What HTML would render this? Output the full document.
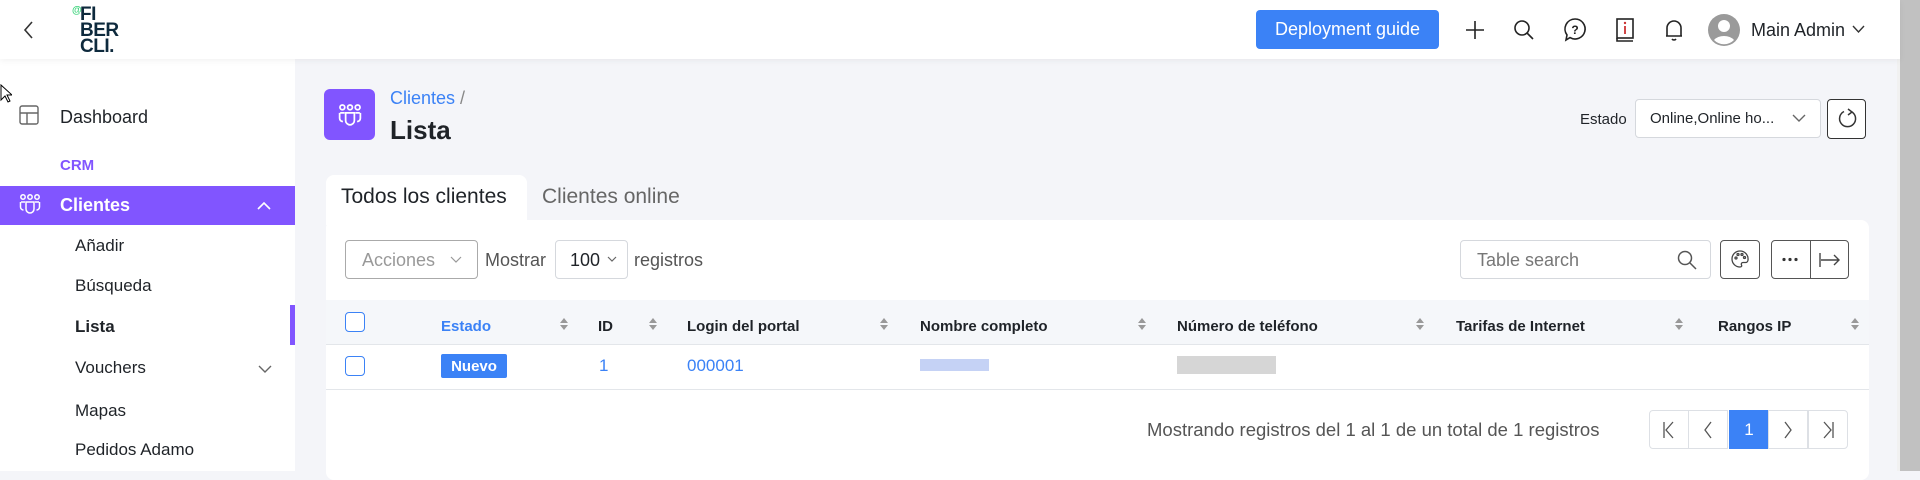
<!DOCTYPE html>
<html><head><meta charset="utf-8"><style>
*{box-sizing:border-box;margin:0;padding:0}
body{width:1920px;height:471px;overflow:hidden;background:#f4f5f9;font-family:"Liberation Sans",sans-serif;color:#1f2328;position:relative}
.a{position:absolute}
.hdr{left:0;top:0;width:1900px;height:59px;background:#fff;box-shadow:0 2px 6px rgba(0,0,0,.05);z-index:2}
.sb{left:0;top:59px;width:295px;height:412px;background:#fff}
.t{position:absolute;white-space:nowrap;line-height:1}
.sub{font-size:17px;color:#1f2328;left:75px}
.btn{position:absolute;border:1px solid #c9cdd4;border-radius:4px;background:#fff}
.th{font-size:15px;font-weight:bold;top:319px}
.sort{position:absolute;width:8px;top:318px}
.sort:before{content:"";position:absolute;left:0;top:0;border:4px solid transparent;border-bottom:5px solid #999;border-top:0}
.sort:after{content:"";position:absolute;left:0;top:7px;border:4px solid transparent;border-top:5px solid #999;border-bottom:0}
.pg{position:absolute;top:410px;height:39px;width:40px;border:1px solid #dde0e5;background:#fff;display:flex;align-items:center;justify-content:center;font-size:17px;color:#555}
</style></head><body>
<div class="a hdr">
<svg class="a" style="left:22px;top:20px" width="14" height="20" viewBox="0 0 14 20"><path d="M10 2 L3 10 L10 18" fill="none" stroke="#333" stroke-width="1.6"/></svg>
<div class="t" style="left:72px;top:6px;font-size:10px;color:#3ad37a;font-weight:bold">@</div>
<div class="t" style="left:80px;top:7px;font-size:19px;font-weight:bold;color:#0e2a3d;line-height:16px;letter-spacing:-0.5px">FI<br>BER<br>CLI.</div>
<div class="a" style="left:1256px;top:10px;width:183px;height:39px;background:#3b82f6;border-radius:4px;color:#fff;font-size:18px;display:flex;align-items:center;justify-content:center">Deployment guide</div>
<svg class="a" style="left:1464px;top:19px" width="22" height="22" viewBox="0 0 22 22"><path d="M11 2V20M2 11H20" stroke="#222" stroke-width="1.6"/></svg>
<svg class="a" style="left:1513px;top:19px" width="22" height="22" viewBox="0 0 22 22"><circle cx="9" cy="9" r="7" fill="none" stroke="#222" stroke-width="1.6"/><path d="M14 14L20 20" stroke="#222" stroke-width="1.6"/></svg>
<svg class="a" style="left:1563px;top:17px" width="24" height="26" viewBox="0 0 24 26"><path d="M12 2a10 10 0 1 1 -5 18.6 L3 23 L4 18 A10 10 0 0 1 12 2z" fill="none" stroke="#222" stroke-width="1.6"/><text x="12" y="17" font-size="12" text-anchor="middle" font-family="Liberation Sans" font-weight="bold" fill="#222">?</text></svg>
<svg class="a" style="left:1614px;top:17px" width="22" height="26" viewBox="0 0 22 26"><rect x="3" y="2" width="16" height="19" fill="none" stroke="#222" stroke-width="1.6"/><path d="M3 21v3h16" fill="none" stroke="#222" stroke-width="1.6"/><path d="M11 9v8" stroke="#c33" stroke-width="1.8"/><circle cx="11" cy="6" r="1.2" fill="#c33"/></svg>
<svg class="a" style="left:1663px;top:17px" width="22" height="26" viewBox="0 0 22 26"><path d="M4 19 V11 a7 7 0 0 1 14 0 V19 H3 H19" fill="none" stroke="#222" stroke-width="1.6"/><path d="M9 22a2.5 2.5 0 0 0 4 0" fill="none" stroke="#222" stroke-width="1.6"/></svg>
<svg class="a" style="left:1708px;top:14px" width="32" height="32" viewBox="0 0 32 32"><circle cx="16" cy="16" r="16" fill="#9a9a9a"/><circle cx="16" cy="12" r="6" fill="#fff"/><path d="M6 26a12 9 0 0 1 20 0a14 14 0 0 1 -20 0z" fill="#fff"/></svg>
<div class="t" style="left:1751px;top:21px;font-size:18px">Main Admin</div>
<svg class="a" style="left:1852px;top:25px" width="13" height="9" viewBox="0 0 13 9"><path d="M1 1L6.5 7L12 1" fill="none" stroke="#333" stroke-width="1.4"/></svg>
</div>
<div class="a" style="left:1897px;top:0;width:23px;height:471px;background:#f1f1f1"></div>
<div class="a" style="left:1900px;top:0;width:20px;height:471px;background:#c1c1c1"></div>

<div class="a sb">
<svg class="a" style="left:19px;top:46px" width="20" height="20" viewBox="0 0 20 20"><rect x="1" y="1" width="18" height="18" rx="2" fill="none" stroke="#666" stroke-width="1.4"/><path d="M1 8H19M8 8V19" stroke="#666" stroke-width="1.4"/></svg>
<div class="t" style="left:60px;top:49px;font-size:18px">Dashboard</div>
<div class="t" style="left:60px;top:99px;font-size:15px;font-weight:bold;color:#8155ff">CRM</div>
<div class="a" style="left:0;top:127px;width:295px;height:39px;background:#8155ff"></div>
<svg class="a" style="left:19px;top:134px" width="22" height="22" viewBox="0 0 22 22" fill="none" stroke="#fff" stroke-width="1.5"><circle cx="4" cy="4" r="2.2"/><circle cx="11" cy="4" r="2.2"/><circle cx="18" cy="4" r="2.2"/><path d="M2 9h4M16 9h4M1.5 9v5a3 3 0 0 0 3 3M20.5 9v5a3 3 0 0 1 -3 3M7 9h8v7a4 4 0 0 1 -8 0z"/></svg>
<div class="t" style="left:60px;top:137px;font-size:18px;font-weight:bold;color:#fff">Clientes</div>
<svg class="a" style="left:257px;top:142px" width="14" height="9" viewBox="0 0 14 9"><path d="M1 8L7 2L13 8" fill="none" stroke="#fff" stroke-width="1.6"/></svg>
<div class="t sub" style="top:178px">Añadir</div>
<div class="t sub" style="top:218px">Búsqueda</div>
<div class="t sub" style="top:259px;font-weight:bold">Lista</div>
<div class="a" style="left:290px;top:246px;width:5px;height:40px;background:#8155ff"></div>
<div class="t sub" style="top:300px">Vouchers</div>
<svg class="a" style="left:258px;top:306px" width="14" height="9" viewBox="0 0 14 9"><path d="M1 1L7 7L13 1" fill="none" stroke="#666" stroke-width="1.4"/></svg>
<div class="t sub" style="top:343px">Mapas</div>
<div class="t sub" style="top:382px">Pedidos Adamo</div>
</div>
<svg class="a" style="left:0;top:84px" width="12" height="20" viewBox="0 0 12 20"><path d="M1 1V16L5 12L8 18L10 17L7 11H12Z" fill="#fff" stroke="#000" stroke-width="1"/></svg>

<div class="a" style="left:324px;top:89px;width:51px;height:51px;background:#8155ff;border-radius:6px"></div>
<svg class="a" style="left:338px;top:103px" width="24" height="24" viewBox="0 0 22 22" fill="none" stroke="#fff" stroke-width="1.6"><circle cx="4" cy="4" r="2.2"/><circle cx="11" cy="4" r="2.2"/><circle cx="18" cy="4" r="2.2"/><path d="M2 9h4M16 9h4M1.5 9v5a3 3 0 0 0 3 3M20.5 9v5a3 3 0 0 1 -3 3M7 9h8v7a4 4 0 0 1 -8 0z"/></svg>
<div class="t" style="left:390px;top:89px;font-size:18px;color:#3b82f6">Clientes <span style="color:#888">/</span></div>
<div class="t" style="left:390px;top:117px;font-size:26px;font-weight:bold">Lista</div>
<div class="t" style="left:1580px;top:112px;font-size:15px">Estado</div>
<div class="btn" style="left:1635px;top:99px;width:186px;height:39px;border-color:#d5d8dd"></div>
<div class="t" style="left:1650px;top:111px;font-size:15px">Online,Online ho...</div>
<svg class="a" style="left:1792px;top:114px" width="14" height="9" viewBox="0 0 14 9"><path d="M1 1L7 7L13 1" fill="none" stroke="#666" stroke-width="1.4"/></svg>
<div class="btn" style="left:1827px;top:99px;width:39px;height:40px;border-color:#333"></div>
<svg class="a" style="left:1836px;top:108px" width="22" height="22" viewBox="0 0 22 22"><path d="M16 4 A8 8 0 1 1 8 3.5" fill="none" stroke="#333" stroke-width="1.5"/><path d="M12 1L16 4L12 7" fill="none" stroke="#333" stroke-width="1.5"/></svg>

<div class="a" style="left:326px;top:175px;width:201px;height:50px;background:#fff;border-radius:8px 8px 0 0"></div>
<div class="t" style="left:341px;top:186px;font-size:21px">Todos los clientes</div>
<div class="t" style="left:542px;top:186px;font-size:21px;color:#666">Clientes online</div>
<div class="a" style="left:326px;top:220px;width:1543px;height:260px;background:#fff;border-radius:8px"></div>

<div class="btn" style="left:345px;top:240px;width:133px;height:39px;border-color:#aaa"></div>
<div class="t" style="left:362px;top:251px;font-size:18px;color:#999">Acciones</div>
<svg class="a" style="left:450px;top:256px" width="12" height="8" viewBox="0 0 12 8"><path d="M1 1L6 6L11 1" fill="none" stroke="#999" stroke-width="1.2"/></svg>
<div class="t" style="left:485px;top:251px;font-size:18px;color:#555">Mostrar</div>
<div class="btn" style="left:555px;top:240px;width:73px;height:39px;border-color:#d5d8dd"></div>
<div class="t" style="left:570px;top:251px;font-size:18px">100</div>
<svg class="a" style="left:607px;top:256px" width="10" height="7" viewBox="0 0 10 7"><path d="M1 1L5 5L9 1" fill="none" stroke="#666" stroke-width="1.2"/></svg>
<div class="t" style="left:634px;top:251px;font-size:18px;color:#555">registros</div>

<div class="btn" style="left:1460px;top:240px;width:251px;height:39px;border-color:#d5d8dd"></div>
<div class="t" style="left:1477px;top:251px;font-size:18px;color:#777">Table search</div>
<svg class="a" style="left:1677px;top:250px" width="20" height="20" viewBox="0 0 20 20"><circle cx="8" cy="8" r="6.5" fill="none" stroke="#555" stroke-width="1.5"/><path d="M13 13L19 19" stroke="#555" stroke-width="1.5"/></svg>
<div class="btn" style="left:1720px;top:240px;width:40px;height:39px;border-color:#555"></div>
<svg class="a" style="left:1730px;top:249px" width="20" height="20" viewBox="0 0 20 20" fill="none" stroke="#444" stroke-width="1.3"><path d="M10 2a8 8 0 0 0 0 16c1.5 0 2-1 1.5-2s0-2.5 1.5-2.5h2.5A2.5 2.5 0 0 0 18 11 A8 8 0 0 0 10 2z"/><circle cx="6" cy="9" r="1"/><circle cx="8" cy="5.5" r="1"/><circle cx="12" cy="5.5" r="1"/><circle cx="14.5" cy="8.5" r="1"/></svg>
<div class="btn" style="left:1771px;top:240px;width:78px;height:39px;border-color:#555"></div>
<div class="a" style="left:1810px;top:240px;width:1px;height:39px;background:#555"></div>
<svg class="a" style="left:1781px;top:257px" width="18" height="5" viewBox="0 0 18 5"><circle cx="3" cy="2.5" r="1.6" fill="#333"/><circle cx="9" cy="2.5" r="1.6" fill="#333"/><circle cx="15" cy="2.5" r="1.6" fill="#333"/></svg>
<svg class="a" style="left:1818px;top:250px" width="24" height="20" viewBox="0 0 24 20"><path d="M2 3V17M3 10H21M16 5L21 10L16 15" fill="none" stroke="#444" stroke-width="1.4"/></svg>

<div class="a" style="left:326px;top:300px;width:1543px;height:45px;background:#f5f7fa;border-bottom:1px solid #e3e6ea"></div>
<div class="a" style="left:345px;top:312px;width:20px;height:20px;border:1.5px solid #3b82f6;border-radius:4px;background:#fff"></div>
<div class="t th" style="left:441px;color:#3b82f6">Estado</div><div class="sort" style="left:560px"></div>
<div class="t th" style="left:598px">ID</div><div class="sort" style="left:649px"></div>
<div class="t th" style="left:687px">Login del portal</div><div class="sort" style="left:880px"></div>
<div class="t th" style="left:920px">Nombre completo</div><div class="sort" style="left:1138px"></div>
<div class="t th" style="left:1177px">Número de teléfono</div><div class="sort" style="left:1416px"></div>
<div class="t th" style="left:1456px">Tarifas de Internet</div><div class="sort" style="left:1675px"></div>
<div class="t th" style="left:1718px">Rangos IP</div><div class="sort" style="left:1851px"></div>

<div class="a" style="left:326px;top:389px;width:1543px;height:1px;background:#e3e6ea"></div>
<div class="a" style="left:345px;top:356px;width:20px;height:20px;border:1.5px solid #3b82f6;border-radius:4px;background:#fff"></div>
<div class="a" style="left:441px;top:354px;width:66px;height:24px;background:#3b82f6;border-radius:2px;color:#fff;font-size:15px;font-weight:bold;display:flex;align-items:center;justify-content:center">Nuevo</div>
<div class="t" style="left:599px;top:357px;font-size:17px;color:#3b82f6">1</div>
<div class="t" style="left:687px;top:357px;font-size:17px;color:#3b82f6">000001</div>
<div class="a" style="left:920px;top:359px;width:69px;height:12px;background:#c5d2f5"></div>
<div class="a" style="left:1177px;top:356px;width:99px;height:18px;background:#d6d6d6"></div>

<div class="t" style="left:1147px;top:421px;font-size:18.5px;color:#555">Mostrando registros del 1 al 1 de un total de 1 registros</div>
<div class="pg" style="left:1649px;border-radius:4px 0 0 4px"><svg width="16" height="20" viewBox="0 0 16 20"><path d="M3 2V18M12 2L5 10L12 18" fill="none" stroke="#555" stroke-width="1.3"/></svg></div>
<div class="pg" style="left:1688px"><svg width="12" height="20" viewBox="0 0 12 20"><path d="M9 2L3 10L9 18" fill="none" stroke="#555" stroke-width="1.3"/></svg></div>
<div class="pg" style="left:1729px;background:#3b82f6;border-color:#3b82f6;color:#fff">1</div>
<div class="pg" style="left:1768px"><svg width="12" height="20" viewBox="0 0 12 20"><path d="M3 2L9 10L3 18" fill="none" stroke="#555" stroke-width="1.3"/></svg></div>
<div class="pg" style="left:1808px;border-radius:0 4px 4px 0"><svg width="16" height="20" viewBox="0 0 16 20"><path d="M13 2V18M4 2L11 10L4 18" fill="none" stroke="#555" stroke-width="1.3"/></svg></div>
</body></html>
